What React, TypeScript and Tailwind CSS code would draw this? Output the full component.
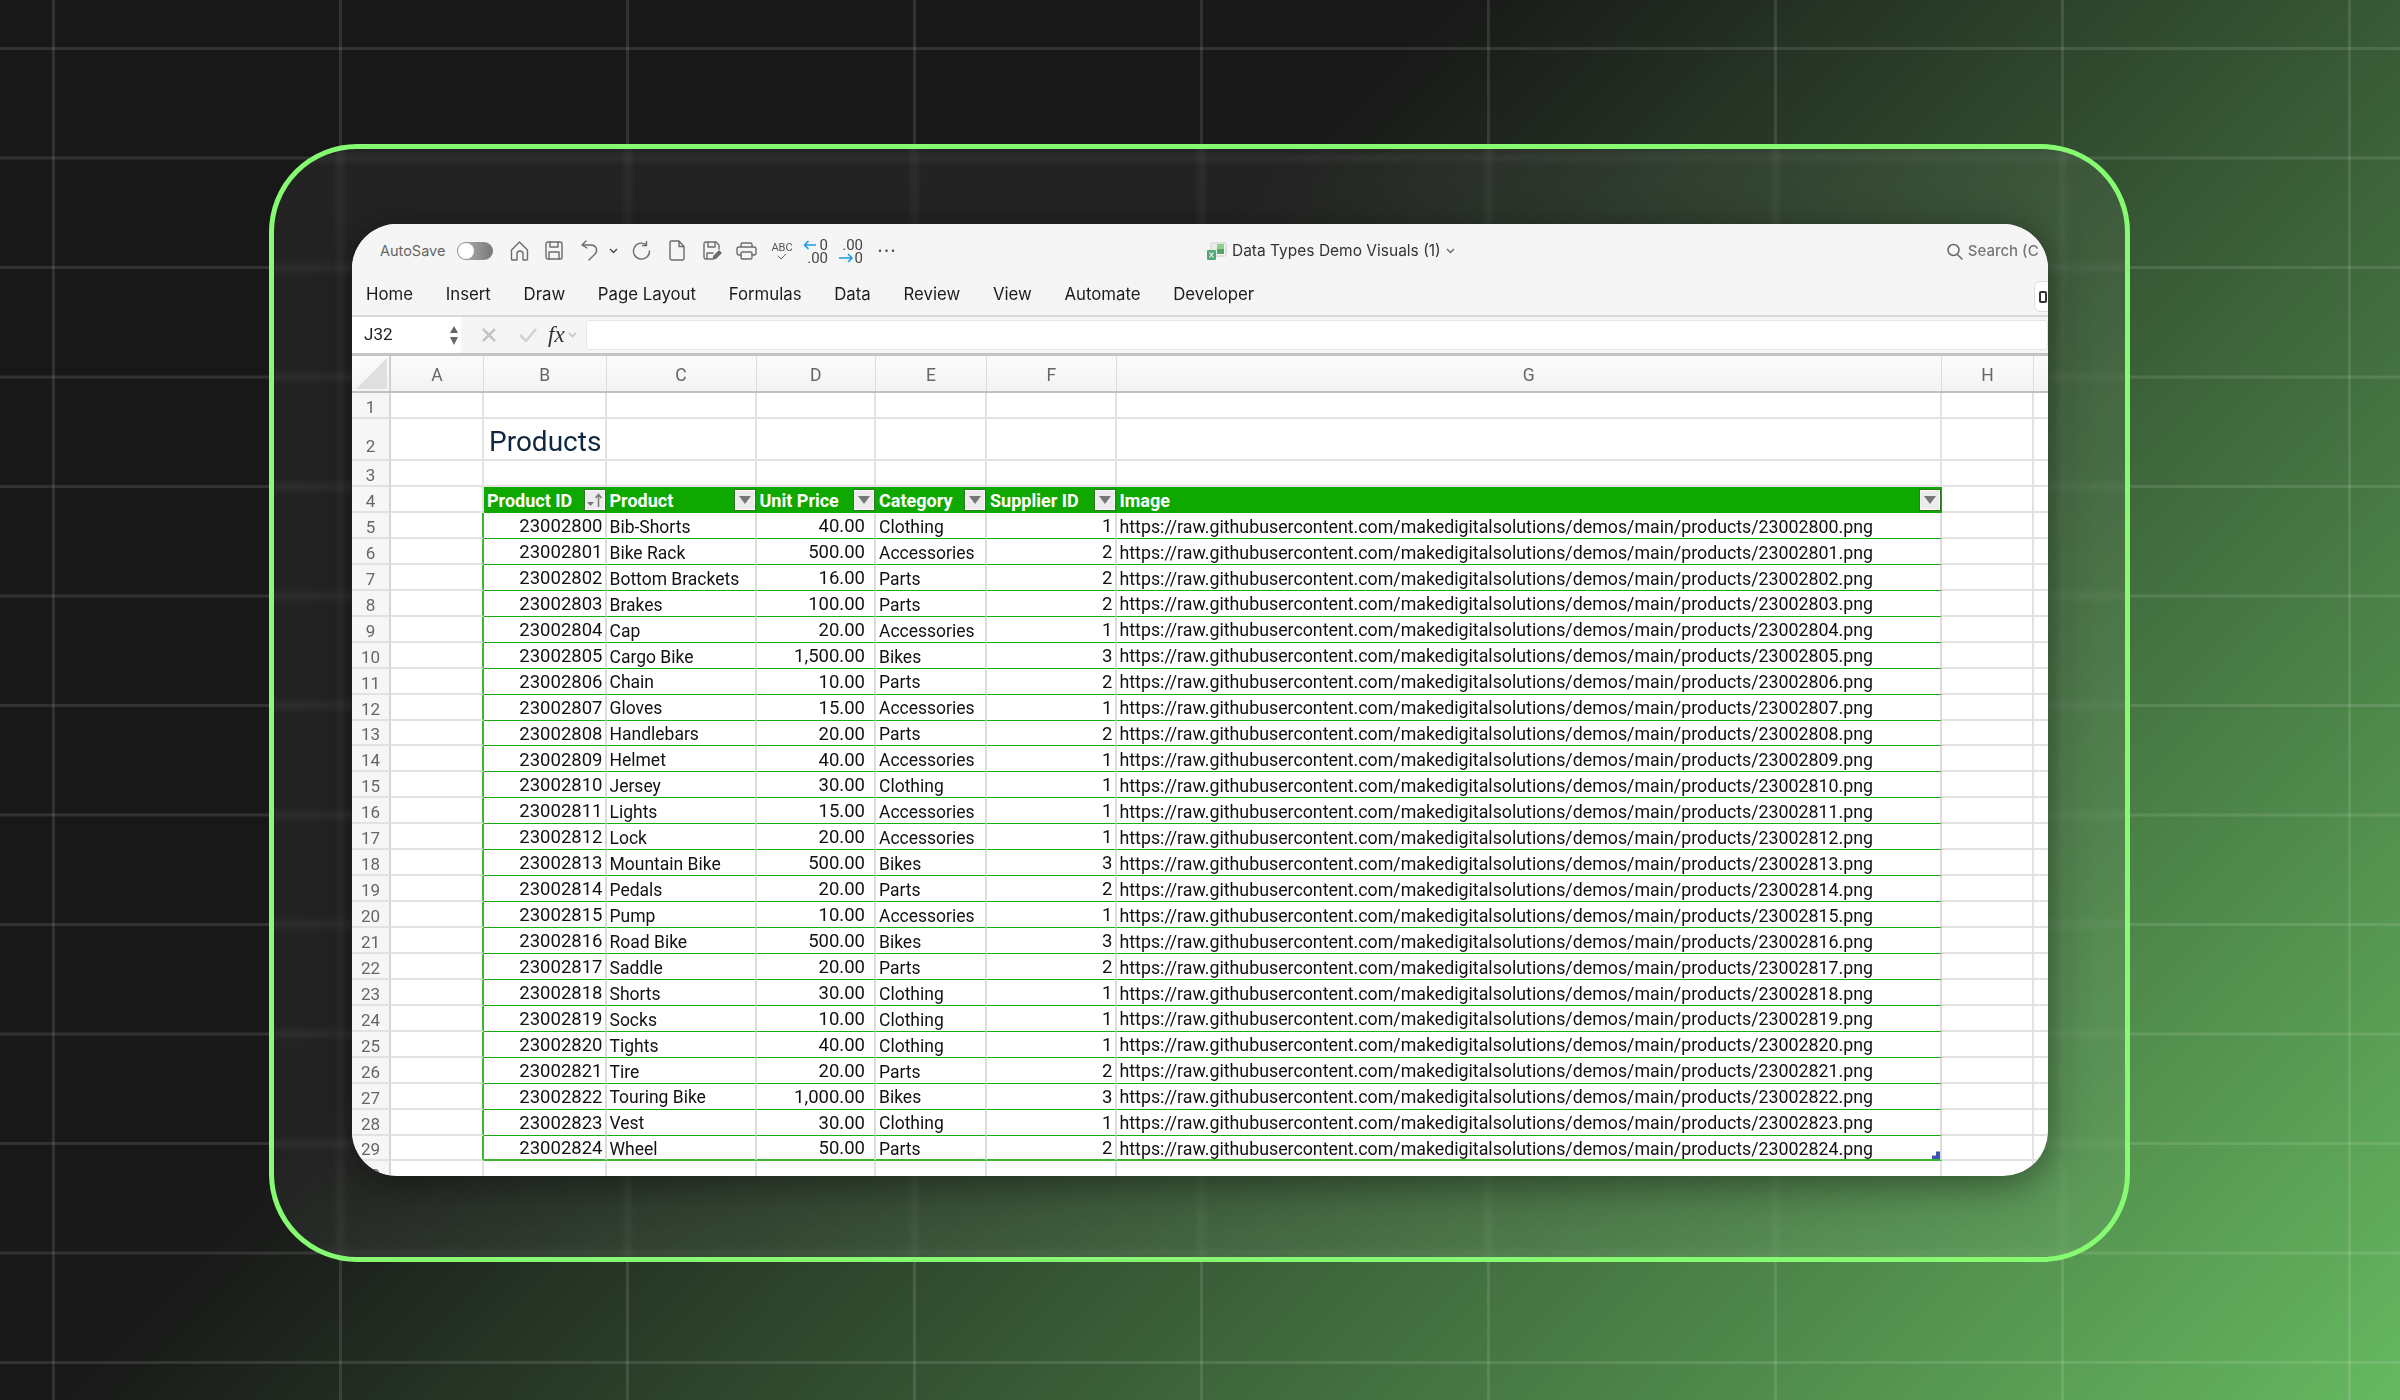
import React from 'react';

const products: [number, string, string, string, number][] = [
  [23002800, 'Bib-Shorts', '40.00', 'Clothing', 1],
  [23002801, 'Bike Rack', '500.00', 'Accessories', 2],
  [23002802, 'Bottom Brackets', '16.00', 'Parts', 2],
  [23002803, 'Brakes', '100.00', 'Parts', 2],
  [23002804, 'Cap', '20.00', 'Accessories', 1],
  [23002805, 'Cargo Bike', '1,500.00', 'Bikes', 3],
  [23002806, 'Chain', '10.00', 'Parts', 2],
  [23002807, 'Gloves', '15.00', 'Accessories', 1],
  [23002808, 'Handlebars', '20.00', 'Parts', 2],
  [23002809, 'Helmet', '40.00', 'Accessories', 1],
  [23002810, 'Jersey', '30.00', 'Clothing', 1],
  [23002811, 'Lights', '15.00', 'Accessories', 1],
  [23002812, 'Lock', '20.00', 'Accessories', 1],
  [23002813, 'Mountain Bike', '500.00', 'Bikes', 3],
  [23002814, 'Pedals', '20.00', 'Parts', 2],
  [23002815, 'Pump', '10.00', 'Accessories', 1],
  [23002816, 'Road Bike', '500.00', 'Bikes', 3],
  [23002817, 'Saddle', '20.00', 'Parts', 2],
  [23002818, 'Shorts', '30.00', 'Clothing', 1],
  [23002819, 'Socks', '10.00', 'Clothing', 1],
  [23002820, 'Tights', '40.00', 'Clothing', 1],
  [23002821, 'Tire', '20.00', 'Parts', 2],
  [23002822, 'Touring Bike', '1,000.00', 'Bikes', 3],
  [23002823, 'Vest', '30.00', 'Clothing', 1],
  [23002824, 'Wheel', '50.00', 'Parts', 2],
];

const tabs = ['Home', 'Insert', 'Draw', 'Page Layout', 'Formulas', 'Data', 'Review', 'View', 'Automate', 'Developer'];

const stroke = { fill: 'none', stroke: '#6b6b6b', strokeWidth: 1.4, strokeLinecap: 'round', strokeLinejoin: 'round' } as const;

const HomeIcon = () => (
  <svg width="19" height="20" viewBox="0 0 19 20" {...stroke} className="ml-[17px] shrink-0">
    <path d="M1.5 9 9.5 1l8 8v9a1 1 0 0 1-1 1h-3.5v-6a3 3 0 0 0-6 0v6H2.500a1 1 0 0 1-1-1z" />
  </svg>
);

const SaveIcon = () => (
  <svg width="18" height="19" viewBox="0 0 18 19" {...stroke} className="ml-[16px] shrink-0">
    <rect x="1" y="1" width="16" height="17" rx="2" />
    <path d="M5 1v5h8V1M4 18v-7h10v7" />
  </svg>
);

const UndoIcon = () => (
  <svg width="18" height="21" viewBox="0 0 18 21" {...stroke} className="ml-[18px] shrink-0">
    <path d="M5 1 1 5l5 3M1.500 5H10c5 0 7.500 5 4 9l-6 6" />
  </svg>
);

const RedoIcon = () => (
  <svg width="19" height="19" viewBox="0 0 19 19" {...stroke} className="ml-[14px] shrink-0">
    <path d="M14 3.500A8 8 0 1 0 17.500 10M14.500 0.500v4h-4" />
  </svg>
);

const DocIcon = () => (
  <svg width="16" height="21" viewBox="0 0 16 21" {...stroke} className="ml-[18px] shrink-0">
    <path d="M2.500 1H10l5 5.500V18a2 2 0 0 1-2 2H3a2 2 0 0 1-2-2V2.500A1.500 1.500 0 0 1 2.500 1zM10 1v5.500h5" />
  </svg>
);

const SaveEditIcon = () => (
  <svg width="19" height="19" viewBox="0 0 19 19" {...stroke} className="ml-[18px] shrink-0">
    <path d="M9 18H3a2 2 0 0 1-2-2V3a2 2 0 0 1 2-2h10l3 3v4M5 1v5h7V1M4 18v-6h6" />
    <path d="m10 18 1-3 5-5 2 2-5 5z" fill="#6b6b6b" />
  </svg>
);

const PrintIcon = () => (
  <svg width="21" height="18" viewBox="0 0 21 18" {...stroke} className="ml-[14px] shrink-0">
    <path d="M5 5V2.500A1.500 1.500 0 0 1 6.500 1h8A1.500 1.500 0 0 1 16 2.500V5M5 13H3a2 2 0 0 1-2-2V7a2 2 0 0 1 2-2h15a2 2 0 0 1 2 2v4a2 2 0 0 1-2 2h-2" />
    <rect x="5" y="10" width="11" height="7" rx="1.500" />
  </svg>
);

const SpellIcon = () => (
  <svg width="22" height="20" viewBox="0 0 22 20" className="ml-[14px] shrink-0">
    <text x="11" y="10" textAnchor="middle" fontFamily="Roboto, sans-serif" fontSize="11" fill="#555">ABC</text>
    <path d="m7 15 3 3 5-5" {...stroke} strokeWidth={1} />
  </svg>
);

const DecimalLess = () => (
  <svg width="25" height="32" viewBox="0 0 25 32" className="ml-[10px] shrink-0">
    <path d="M13 10H2m3.500-4L1.500 10l4 4" fill="none" stroke="#1c9be0" strokeWidth="1.600" />
    <text x="25" y="15" textAnchor="end" fontFamily="Roboto, sans-serif" fontSize="15" fill="#444">0</text>
    <text x="25" y="28" textAnchor="end" fontFamily="Roboto, sans-serif" fontSize="15" fill="#444">.00</text>
  </svg>
);

const DecimalMore = () => (
  <svg width="25" height="32" viewBox="0 0 25 32" className="ml-[10px] shrink-0">
    <text x="25" y="15" textAnchor="end" fontFamily="Roboto, sans-serif" fontSize="15" fill="#444">.00</text>
    <text x="25" y="28" textAnchor="end" fontFamily="Roboto, sans-serif" fontSize="15" fill="#444">0</text>
    <path d="M1 23h13m-4-4 4 4-4 4" fill="none" stroke="#1c9be0" strokeWidth="1.600" />
  </svg>
);

const ExcelIcon = () => (
  <svg width="20" height="18" viewBox="0 0 20 18" className="shrink-0">
    <rect x="4" y="1" width="15" height="13" rx="1.500" fill="#fafafa" stroke="#c4c4c4" />
    <rect x="10" y="2" width="7" height="5" fill="#8bd08f" />
    <rect x="10" y="7" width="7" height="5" fill="#4fa768" />
    <rect x="5" y="2" width="5" height="10" fill="#e4efe6" />
    <rect x="0" y="8" width="9" height="10" rx="1" fill="#52a878" />
    <path d="m2.500 10.500 4 5m0-5-4 5" stroke="#fff" strokeWidth="1.100" />
  </svg>
);

const Chevron = ({ className, color = '#666' }: { className: string; color?: string }) => (
  <svg width="9" height="6" viewBox="0 0 9 6" className={className}>
    <path d="m1 1 3.500 3.500L8 1" fill="none" stroke={color} strokeWidth="1.300" />
  </svg>
);

// little grey filter arrow in the table header
const FilterButton = ({ sorted }: { sorted?: boolean }) => (
  <div className="absolute right-[2px] top-[3px] flex h-[20px] w-[20px] items-center justify-center border border-white bg-[#ececec] shadow-[0_0_0_1px_#2c7a22]">
    {sorted ? (
      <svg width="17" height="15" viewBox="0 0 17 15">
        <path d="M1 9h7l-3.500 4z" fill="#777" />
        <path d="M12.500 14V2M9.500 5l3-3.500 3 3.500" fill="none" stroke="#777" strokeWidth="1.500" />
      </svg>
    ) : (
      <svg width="12" height="8" viewBox="0 0 12 8">
        <path d="M0 0h12L6 8z" fill="#777" />
      </svg>
    )}
  </div>
);

const cols = ['w-[93px]', 'w-[122.5px]', 'w-[150px]', 'w-[119.5px]', 'w-[111px]', 'w-[129.5px]', 'w-[825.5px]', 'w-[92px]', 'w-[40px]'];

const RowNumber = ({ n, tall }: { n: number; tall?: boolean }) => (
  <div className={`flex h-full w-[39px] shrink-0 items-end justify-center border-r-2 border-b-2 border-r-[#d6d6d6] border-b-[#e2e2e2] bg-[#f6f6f6] font-['Roboto',sans-serif] text-[17px] leading-[20px] text-[#666] ${tall ? 'pb-[3px]' : ''}`}>
    {n}
  </div>
);

const EmptyRow = ({ n, height }: { n: number; height: string }) => (
  <div className={`flex shrink-0 ${height}`}>
    <RowNumber n={n} />
    {cols.map(c => (
      <div key={c} className={`${c} h-full shrink-0 border-r-2 border-b-2 border-[#e2e2e2]`} />
    ))}
  </div>
);

const rowBase = 'flex h-full shrink-0 items-center whitespace-nowrap border-r-2 border-r-[#dcdcdc] pt-[3px]';

const App: React.FC = () => {
  return (
    <div className="relative h-[1400px] w-[2400px] overflow-hidden bg-[linear-gradient(135deg,#181818_0%,#181818_38%,#66b860_100%)]">
      {/* background grid */}
      <div className="absolute inset-0 bg-[linear-gradient(to_right,rgba(255,255,255,0.11)_3px,transparent_3px),linear-gradient(to_bottom,rgba(255,255,255,0.11)_3px,transparent_3px)] bg-[size:287px_109.500px] bg-[position:52px_47px]" />

      <div className="relative pl-[269px] pt-[144px]">
        <div className="h-[1118px] w-[1861px] rounded-[88px] border-[5px] border-[#86fb72] bg-white/5 pl-[78px] pt-[75px] backdrop-blur-[3px]">
          <div className="flex h-[952px] w-[1696px] flex-col overflow-hidden rounded-[45px] bg-white font-['Roboto',sans-serif] text-[#111] shadow-[0_8px_40px_rgba(0,0,0,0.45)]">
            {/* title bar */}
            <div className="flex h-[52px] shrink-0 items-center whitespace-nowrap bg-[#f5f5f5] pl-[28px] pt-[1px] font-['Inter',sans-serif]">
              <span className="text-[14.500px] text-[#666]">AutoSave</span>
              <div className="ml-[12px] flex h-[18px] w-[36px] shrink-0 items-center rounded-full bg-[linear-gradient(to_right,#bbb,#777)] px-[1px]">
                <div className="h-[16px] w-[16px] rounded-full bg-white shadow-[0_0_0_1px_#999]" />
              </div>
              <HomeIcon />
              <SaveIcon />
              <UndoIcon />
              <Chevron className="ml-[10px] shrink-0" color="#444" />
              <RedoIcon />
              <DocIcon />
              <SaveEditIcon />
              <PrintIcon />
              <SpellIcon />
              <DecimalLess />
              <DecimalMore />
              <span className="ml-[14px] shrink-0 text-[15px] font-bold tracking-[1.500px] text-[#555] leading-none">···</span>
              <div className="ml-[310px] flex shrink-0 items-center">
                <ExcelIcon />
                <span className="ml-[5px] text-[15.500px] text-[#333]">Data Types Demo Visuals (1)</span>
                <Chevron className="ml-[5px]" />
              </div>
              <svg width="18" height="18" viewBox="0 0 18 18" className="ml-[491px] mt-[2px] shrink-0" fill="none" stroke="#666" strokeWidth="1.500">
                <circle cx="7.500" cy="7" r="5.500" />
                <path d="m11.500 11.500 5 5" />
              </svg>
              <span className="ml-[4px] mt-[2px] shrink-0 text-[15px] font-medium text-[#777]">Search (C</span>
            </div>

            {/* ribbon tabs */}
            <div className="relative flex h-[41px] shrink-0 items-center gap-[32.700px] border-b-2 border-[#d8d8d8] bg-[#f5f5f5] pb-[1px] pl-[14px] font-['Inter',sans-serif] text-[16.800px] text-[#1c1c1c]">
              {tabs.map(t => (
                <span key={t}>{t}</span>
              ))}
              <div className="absolute left-[1682px] top-[5px] flex h-[31px] w-[40px] items-center rounded-[6px] border border-[#ddd] bg-white pl-[4px]">
                <div className="h-[12px] w-[8px] rounded-[2px] border-2 border-[#333]" />
              </div>
            </div>

            {/* formula bar */}
            <div className="flex h-[39px] shrink-0 items-stretch border-b-[3px] border-[#c4c4c4] bg-[#f5f5f5]">
              <div className="flex w-[109px] shrink-0 items-center justify-between bg-white pl-[12px] pr-[2px] text-[17px] text-[#222]">
                <span>J32</span>
                <svg width="10" height="22" viewBox="0 0 10 22">
                  <path d="M5 2 9 9H1zM5 21 1 13h8z" fill="#666" />
                </svg>
              </div>
              <div className="flex w-[125px] shrink-0 items-center">
                <svg width="16" height="16" viewBox="0 0 16 16" className="ml-[20px]">
                  <path d="m2 2 12 12M14 2 2 14" stroke="#c4c4c4" strokeWidth="2.500" />
                </svg>
                <svg width="20" height="16" viewBox="0 0 20 16" className="ml-[21px]">
                  <path d="m2 8 6 6L18 2" fill="none" stroke="#d0d0d0" strokeWidth="2.500" />
                </svg>
                <span className="ml-[10px] font-['Liberation_Serif',serif] text-[23px] italic text-[#333]">fx</span>
                <Chevron className="ml-[3px]" color="#bbb" />
              </div>
              <div className="my-[3px] flex-1 rounded-[3px] border border-[#e6e6e6] bg-white" />
            </div>

            {/* column headers */}
            <div className="flex h-[37px] shrink-0 border-b-2 border-[#c0c0c0] bg-[linear-gradient(to_bottom,#fbfbfb,#f3f3f3)] text-[17.500px] text-[#666]">
              <div className="flex w-[39px] shrink-0 items-end justify-end border-r-2 border-[#d0d0d0] pb-[2px] pr-[2px]">
                <div className="h-[31px] w-[31px] bg-[#dfdfdf] [clip-path:polygon(100%_0,100%_100%,0_100%)]" />
              </div>
              {['A', 'B', 'C', 'D', 'E', 'F', 'G', 'H', ''].map((l, i) => (
                <div key={i} className={`${cols[i]} flex shrink-0 items-center justify-center border-r border-[#dcdcdc] pt-[3px]`}>
                  {l}
                </div>
              ))}
            </div>

            <EmptyRow n={1} height="h-[26px]" />
            <div className="flex h-[42px] shrink-0">
              <RowNumber n={2} tall />
              {cols.map((c, i) => (
                <div key={c} className={`${c} flex h-full shrink-0 items-center whitespace-nowrap border-r-2 border-b-2 border-[#e2e2e2] pt-[5px]`}>
                  {i === 1 && <span className="pl-[5px] font-['Roboto',sans-serif] text-[28px] text-[#0e2841]">Products</span>}
                </div>
              ))}
            </div>
            <EmptyRow n={3} height="h-[26px]" />

            {/* table header */}
            <div className="flex h-[26px] shrink-0">
              <RowNumber n={4} />
              <div className={`${cols[0]} shrink-0 border-r-2 border-b-2 border-[#e2e2e2]`} />
              {['Product ID', 'Product', 'Unit Price', 'Category', 'Supplier ID', 'Image'].map((h, i) => (
                <div key={h} className={`${cols[i + 1]} relative flex h-full shrink-0 items-center whitespace-nowrap bg-[#0ea800] pl-[3px] pt-[1px] text-[18px] font-bold text-white`}>
                  {h}
                  <FilterButton sorted={i === 0} />
                </div>
              ))}
              <div className={`${cols[7]} shrink-0 border-r-2 border-b-2 border-[#e2e2e2]`} />
              <div className={`${cols[8]} shrink-0 border-b-2 border-[#e2e2e2]`} />
            </div>

            {/* table body */}
            {products.map(([id, name, price, category, supplier], i) => {
              const line = i === products.length - 1 ? 'border-b-2 border-b-[#3cb52f]' : 'border-b border-b-[#17ad0c]';
              return (
                <div key={id} className="flex h-[25.950px] shrink-0">
                  <RowNumber n={i + 5} />
                  <div className={`${cols[0]} h-full shrink-0 border-r-2 border-r-[#3cb52f] border-b-2 border-b-[#e2e2e2]`} />
                  <div className={`${cols[1]} ${rowBase} ${line} justify-end pr-[2px] text-[18.500px]`}>{id}</div>
                  <div className={`${cols[2]} ${rowBase} ${line} pl-[3px] text-[17.500px]`}>{name}</div>
                  <div className={`${cols[3]} ${rowBase} ${line} justify-end pr-[9px] text-[18.500px]`}>{price}</div>
                  <div className={`${cols[4]} ${rowBase} ${line} pl-[3px] text-[17.500px]`}>{category}</div>
                  <div className={`${cols[5]} ${rowBase} ${line} justify-end pr-[2px] text-[18.500px]`}>{supplier}</div>
                  <div className={`${cols[6]} ${rowBase} ${line} relative border-r-[#3cb52f] pl-[3px] text-[17.800px]`}>
                    {`https://raw.githubusercontent.com/makedigitalsolutions/demos/main/products/${id}.png`}
                    {i === products.length - 1 && (
                      <div className="absolute bottom-0 right-0 h-[8px] w-[8px] bg-[#3f55b5] [clip-path:polygon(50%_0,100%_0,100%_100%,0_100%,0_50%,50%_50%)]" />
                    )}
                  </div>
                  <div className={`${cols[7]} h-full shrink-0 border-r-2 border-b-2 border-[#e2e2e2]`} />
                  <div className={`${cols[8]} h-full shrink-0 border-b-2 border-[#e2e2e2]`} />
                </div>
              );
            })}
            <EmptyRow n={30} height="h-[26px]" />
          </div>
        </div>
      </div>
    </div>
  );
};

export default App;
